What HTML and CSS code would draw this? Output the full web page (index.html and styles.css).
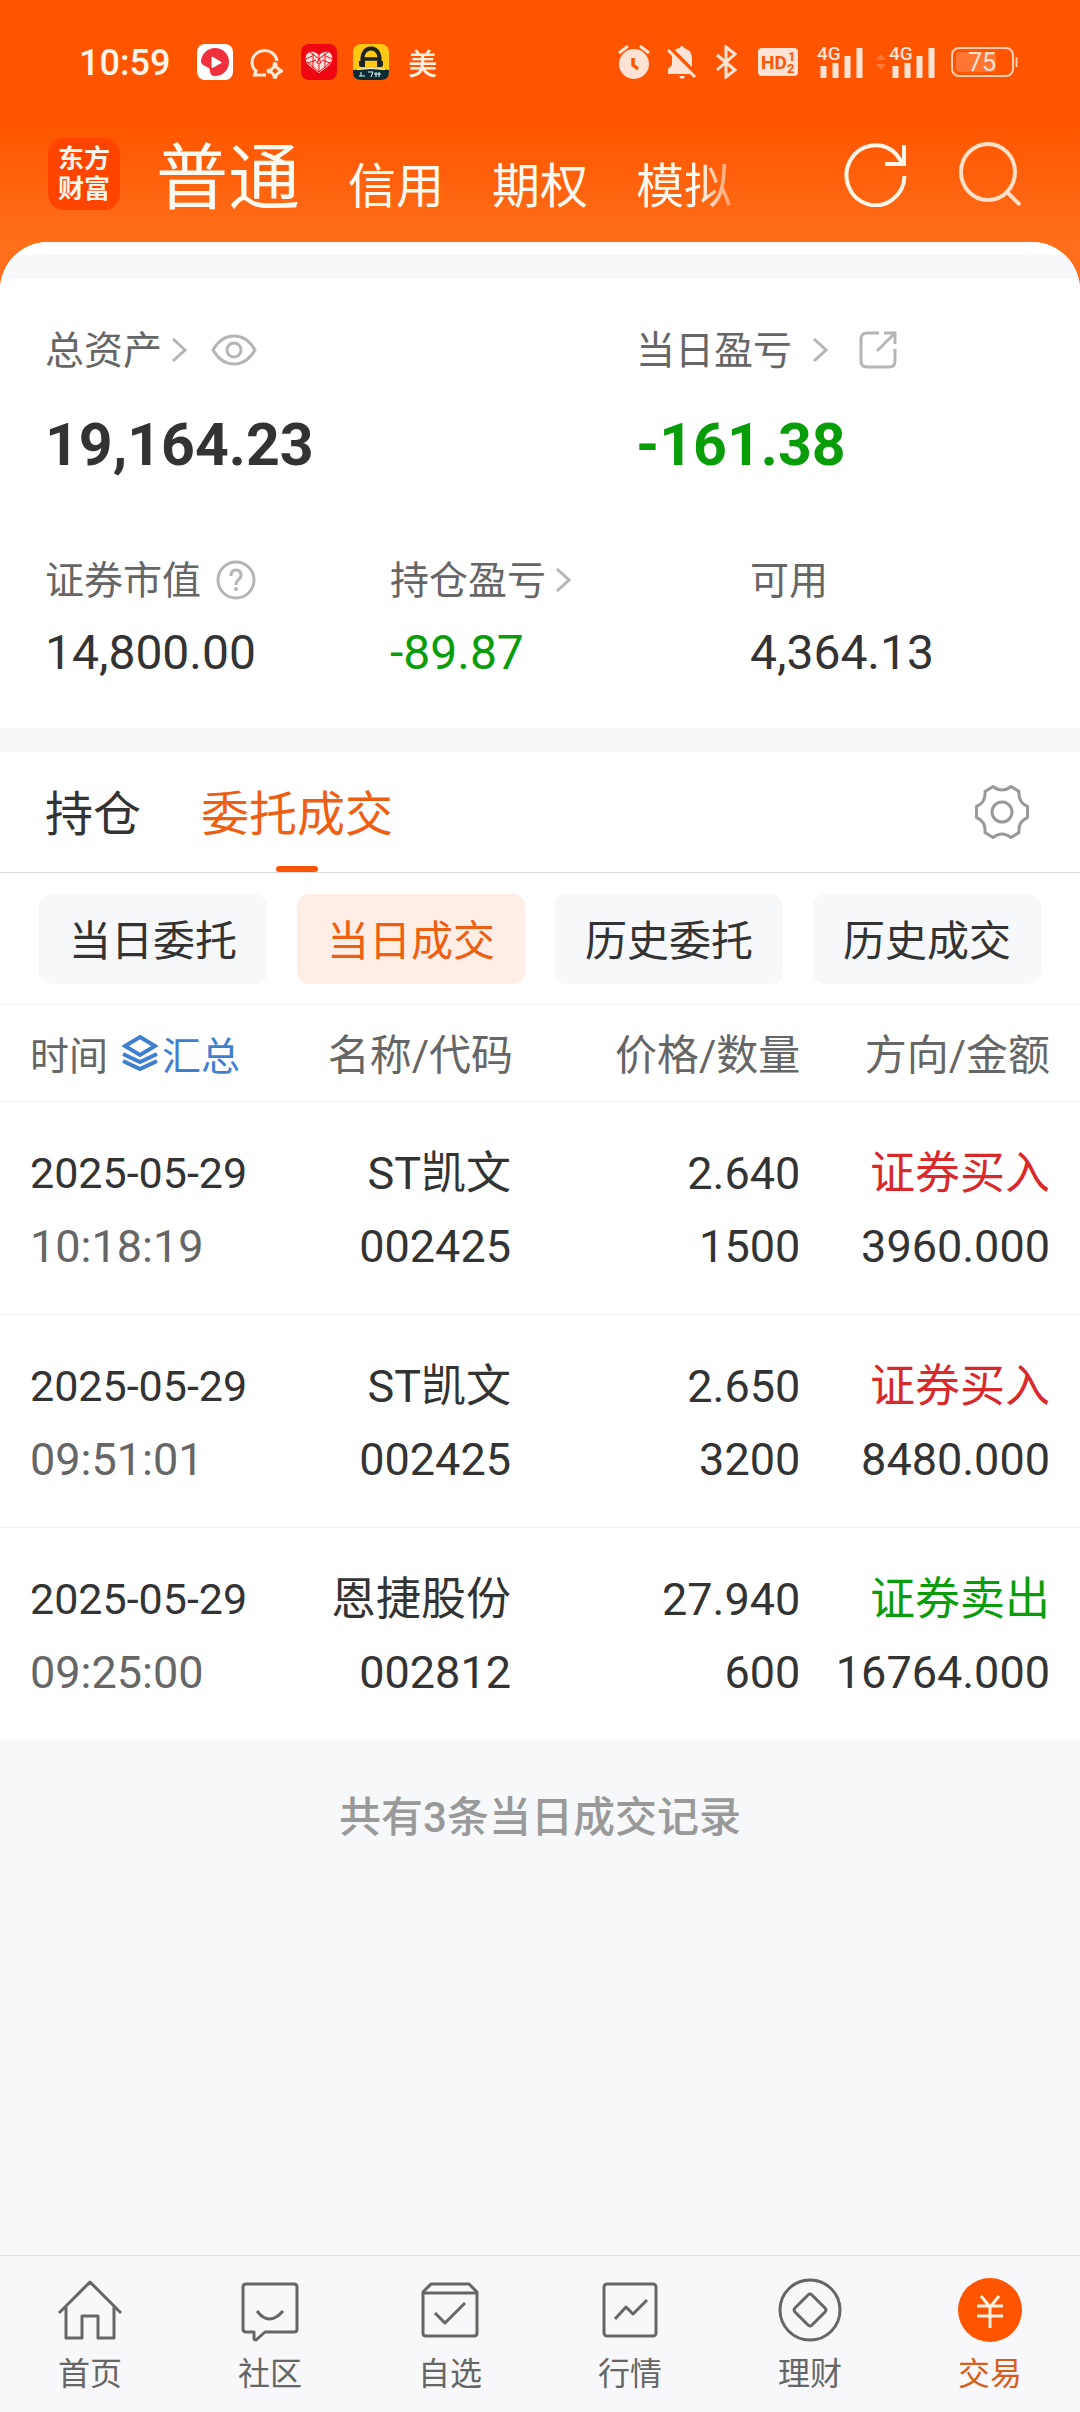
FILE: index.html
```html
<!DOCTYPE html>
<html lang="zh-CN">
<head>
<meta charset="utf-8">
<meta name="viewport" content="width=device-width">
<title>东方财富 交易</title>
<link rel="stylesheet" href="styles.css">
</head>
<body>
<header class="top">
  <div class="status">
    <div class="status-left">
      <span class="clock">10:59</span>
      <svg class="app" viewBox="0 0 36 36"><rect width="36" height="36" rx="8" fill="#fff"/><path d="M18 4a14 14 0 1 1 0 28c-3 0-5-2-5-5 0-2-1-3-3-4-4-2-6-3-6-6C5 9 11 4 18 4z" fill="#f0303c"/><path d="M14.500 13.500v9.500q0 1.500 1.500.7l8-4.400q1.300-.8 0-1.600l-8-4.800q-1.500-.8-1.500.6z" fill="#fff"/></svg>
      <svg class="app" viewBox="0 0 36 36" fill="none" stroke="#ffe9d8" stroke-width="3"><path d="M28 17C27 10 21 6 15 6.500 8 7 3 12 3 18.500c0 3 1 6 4 8.500l-1.500 4H17M26 22l6 5-6 5-5-5z"/><g fill="#ffe9d8" stroke="none"><circle cx="26" cy="20.500" r="2.500"/><circle cx="32" cy="27" r="2"/><circle cx="26" cy="32.500" r="2.500"/><circle cx="20" cy="27" r="2.500"/></g></svg>
      <svg class="app" viewBox="0 0 36 36"><rect width="36" height="36" rx="8" fill="#ee0712"/><path d="M18 29 8 21.500C3 17 4 9 9 8c3-.6 7 .5 9 3.500C20 8.500 24 7.400 27 8c5 1 6 9 1 13.500z" fill="#ffe1dc"/><path d="m9 8 9 7 9-7M5 15l6-3M31 15l-6-3M6 18l12 10M30 18 18 28M12 9v15M24 9v15M18 11v5M18 21v7M7 19l8-3M29 19l-8-3" stroke="#ee0712" stroke-width="1" fill="none"/><path d="m18 15 3 3-3 3-3-3z" fill="#ee0712"/><path d="M16.500 18h3M18 16.500v3" stroke="#ffe1dc"/></svg>
      <svg class="app" viewBox="0 0 36 36"><rect width="36" height="36" rx="8" fill="#ffc813"/><path d="M10 20c-2-8 1-15.500 8-15.500S28 12 26 20" fill="none" stroke="#1b2422" stroke-width="4"/><path d="M10 15h16" stroke="#1b2422" stroke-width="3.500"/><path d="M6 17h6v6H8q-2 0-2-2zM24 17h6v4q0 2-2 2h-4z" fill="#1b2422"/><path d="M0 26q18-3 36 0v2q0 8-8 8H8q-8 0-8-8z" fill="#0d2b34"/><path d="M4 25.500q14-2 28 0" stroke="#fff" fill="none"/><path d="M8 28v4m-2 0h6m3-4h5l-2 5m5-5v5m3-5v5m-5-3h7" stroke="#dff" fill="none"/></svg>
      <span class="notice">美</span>
    </div>
    <div class="status-right">
      <svg viewBox="0 0 32 34" width="32" height="34"><circle cx="16" cy="19" r="15" fill="#ffe3d5"/><path d="m1 8 9-7M31 8l-9-7" stroke="#ffe3d5" stroke-width="3"/><path d="M15 13v7l5 4" fill="none" stroke="#ff5500" stroke-width="3.500"/></svg>
      <svg class="bell" viewBox="0 0 30 34" width="30" height="34"><path d="M8 5q2-2 5-2 0-2 2-2t2 2q8 2 8 11v9l5 6H1v-5l4-4v-8z" fill="#ffe3d5"/><path d="M12 31h6q-1 3-3 3t-3-3z" fill="#ffe3d5"/><path d="m3 3 28 28" stroke="#ff5500" stroke-width="4"/><path d="m1 5 27 27" stroke="#ffe3d5" stroke-width="3"/></svg>
      <svg class="bt" viewBox="0 0 22 34" width="22" height="34"><path d="m1 10 18 15-9 7V2l9 7L1 25" fill="none" stroke="#ffe3d5" stroke-width="3"/></svg>
      <svg class="hd" viewBox="0 0 40 28" width="40" height="28"><rect width="40" height="28" rx="4" fill="#ffe3d5"/><text x="3" y="21" font-size="19" font-weight="700">HD</text><text x="30" y="13" font-size="13" font-weight="700">1</text><text x="29" y="25" font-size="13" font-weight="700">2</text></svg>
      <svg class="signal" viewBox="0 0 47 38" width="47" height="38"><text x="0" y="17" font-size="19" font-weight="500">4G</text><path d="M6.500 23v12M18.500 20v15M30.500 13v22M42.500 5v30" stroke-width="6"/></svg>
      <svg class="updown" viewBox="0 0 10 16" width="10" height="16"><path d="m5 0 5 6H0zM5 16l5-6H0z" fill="#ff7a3a"/></svg>
      <svg class="signal second" viewBox="0 0 47 38" width="47" height="38"><text x="0" y="17" font-size="19" font-weight="500">4G</text><path d="M6.500 23v12M18.500 20v15M30.500 13v22M42.500 5v30" stroke-width="6"/></svg>
      <svg class="battery" viewBox="0 0 67 30" width="67" height="30"><rect x="1" y="1" width="61" height="28" rx="7" fill="none" stroke="#ffcdb3" stroke-width="2"/><rect x="5" y="5" width="40" height="20" rx="4" fill="#ff7532"/><path d="M65.500 10v10" stroke="#ffcdb3" stroke-width="2"/><text x="17" y="24" font-size="25">75</text></svg>
    </div>
  </div>
  <div class="bar">
    <span class="logo"><span>东方</span><span>财富</span></span>
    <nav class="accounts">
      <a href="#" class="on">普通</a><a href="#">信用</a><a href="#">期权</a><a href="#" class="fade">模拟</a>
    </nav>
    <button class="icon" aria-label="刷新"><svg viewBox="0 0 64 66" width="64" height="66" fill="none" stroke="#fff5e8" stroke-width="4"><path d="M60.500 35A29 30 0 1 1 52 13l8 11"/><path d="M60 4v19H41"/></svg></button>
    <button class="icon" aria-label="搜索"><svg viewBox="0 0 64 64" width="64" height="64" fill="none" stroke="#ffe0c8" stroke-width="4"><ellipse cx="30" cy="30" rx="27" ry="28"/><path d="m48 49 14 14"/></svg></button>
  </div>
</header>

<main class="sheet">
  <section class="assets">
    <div class="row totals">
      <div>
        <div class="label"><a href="#">总资产</a><svg class="chev" viewBox="0 0 16 26"><path d="m2 2 12 11L2 24"/></svg><button class="icon eye" aria-label="隐藏金额"><svg viewBox="0 0 46 32" width="46" height="32" fill="none" stroke="#b5b5b5" stroke-width="3"><path d="M2 16Q10 2 23 2t21 14Q36 30 23 30T2 16z"/><circle cx="23" cy="16" r="7"/></svg></button></div>
        <div class="big">19,164.23</div>
      </div>
      <div>
        <div class="label"><a href="#">当日盈亏</a><svg class="chev far" viewBox="0 0 16 26"><path d="m2 2 12 11L2 24"/></svg><button class="icon share" aria-label="分享"><svg viewBox="0 0 38 38" width="38" height="38" fill="none" stroke="#b5b5b5" stroke-width="3"><path d="M20 2H8Q2 2 2 8v22q0 6 6 6h22q6 0 6-6V18M25 2h11v11M35 3 18 20"/></svg></button></div>
        <div class="big green">-161.38</div>
      </div>
    </div>
    <div class="row details">
      <div>
        <div class="label"><span>证券市值</span><button class="icon help" aria-label="说明"><svg viewBox="0 0 40 40" width="40" height="40" fill="none" stroke="#b5b5b5" stroke-width="3"><circle cx="20" cy="20" r="18"/><path d="M15 16q0-6 5-6t5 5q0 3-3 5-2 2-2 5"/><circle cx="20" cy="29" r="1" stroke-width="2"/></svg></button></div>
        <div class="mid">14,800.00</div>
      </div>
      <div>
        <div class="label"><a href="#">持仓盈亏</a><svg class="chev" viewBox="0 0 16 26"><path d="m2 2 12 11L2 24"/></svg></div>
        <div class="mid green">-89.87</div>
      </div>
      <div>
        <div class="label"><span>可用</span></div>
        <div class="mid">4,364.13</div>
      </div>
    </div>
  </section>

  <section class="orders">
    <div class="tabs">
      <button>持仓</button><button class="on">委托成交</button>
      <button class="icon gear" aria-label="设置"><svg viewBox="0 0 54 54" width="54" height="54" fill="none" stroke="#999" stroke-width="3" stroke-linejoin="round"><path d="M18 1.500q9 7 18 0l8 5q-1 11 8.500 15v11q-9.500 4-8.500 15l-8 5q-9-7-18 0l-8-5q1-11-8.500-15v-11q9.500-4 8.500-15z"/><circle cx="27" cy="27" r="10"/></svg></button>
    </div>
    <div class="chips">
      <button>当日委托</button><button class="on">当日成交</button><button>历史委托</button><button>历史成交</button>
    </div>
    <table>
      <colgroup><col class="c1"><col class="c2"><col class="c3"><col class="c4"></colgroup>
      <thead>
        <tr><th><div class="time-head">时间<a href="#" class="sum"><svg viewBox="0 0 36 38" width="36" height="38" fill="none" stroke="#3f7fd0" stroke-width="4"><path d="M18 3 33 12 18 21 3 12z"/><path d="m1 20 17 8 17-8M1 27l17 8 17-8"/></svg>汇总</a></div></th><th>名称/代码</th><th>价格/数量</th><th>方向/金额</th></tr>
      </thead>
      <tbody>
        <tr><td><span class="date">2025-05-29</span><span class="time">10:18:19</span></td><td>ST凯文<br>002425</td><td>2.640<br>1500</td><td><span class="buy">证券买入</span><br>3960.000</td></tr>
        <tr><td><span class="date">2025-05-29</span><span class="time">09:51:01</span></td><td>ST凯文<br>002425</td><td>2.650<br>3200</td><td><span class="buy">证券买入</span><br>8480.000</td></tr>
        <tr><td><span class="date">2025-05-29</span><span class="time">09:25:00</span></td><td>恩捷股份<br>002812</td><td>27.940<br>600</td><td><span class="green">证券卖出</span><br>16764.000</td></tr>
      </tbody>
    </table>
  </section>
  <p class="count">共有3条当日成交记录</p>
</main>

<nav class="dock">
  <a href="#"><svg viewBox="0 0 64 64"><path d="M1 35 32 4l31 31M8 29v31h16V38h16v22h16V29"/></svg>首页</a>
  <a href="#"><svg viewBox="0 0 64 64"><path d="M8 6h48q3 0 3 3v42q0 3-3 3H27l-9 8q-2 0-2-2v-6H8q-3 0-3-3V9q0-3 3-3zM19 33q12 16 26 0"/></svg>社区</a>
  <a href="#"><svg viewBox="0 0 64 64"><path d="M5 14v41q0 3 3 3h48q3 0 3-3V14L51 6H13zM5 15h54M17 35l10 10 20-20"/></svg>自选</a>
  <a href="#"><svg viewBox="0 0 64 64"><rect x="6" y="6" width="52" height="52" rx="3"/><path d="m17 41 11-12 7 7 14-14"/></svg>行情</a>
  <a href="#"><svg viewBox="0 0 64 64"><circle cx="32" cy="32" r="30"/><path d="M30 17q2-2 4 0l13 13q2 2 0 4L34 47q-2 2-4 0L17 34q-2-2 0-4z"/></svg>理财</a>
  <a href="#" class="on"><svg viewBox="0 0 64 64"><circle cx="32" cy="32" r="32"/><path d="m23 18 9 11 9-11M19 28h26M19 38h26M32 28v22"/></svg>交易</a>
</nav>
</body>
</html>
```
FILE: styles.css
```css
* { box-sizing: border-box; }

body {
  margin: 0;
  min-height: 100vh;
  display: flex;
  flex-direction: column;
  background: #f7f8fa;
  color: #333;
  font-family: Roboto, "Noto Sans CJK SC", sans-serif;
  font-size: 39px;
}

a { color: inherit; text-decoration: none; }
button { font: inherit; color: inherit; border: 0; padding: 0; background: none; }
svg { display: block; flex: none; }
.icon { display: block; flex: none; }
.green { color: #0a9d0a; }

/* header */
.top {
  padding-bottom: 48px;
  background: linear-gradient(#ff5500 120px, #ff6e1a 242px);
}
.status {
  display: flex;
  justify-content: space-between;
  height: 124px;
  padding: 0 62px 0 79px;
}
.status-left, .status-right { display: flex; align-items: center; }
.status-left { gap: 16px; }
.clock { color: #fff5ea; font-size: 36px; font-weight: 500; line-height: 40px; padding-top: 2px; margin-right: 11px; }
.app { width: 36px; height: 36px; }
.notice { color: #fff0e0; font-size: 29px; font-weight: 500; margin-left: 3px; }
.status-right text { fill: #ffe3d5; }
.bell { margin-left: 17px; }
.bt { margin-left: 19px; }
.hd { margin-left: 20px; }
.status-right .hd text { fill: #ff5500; }
.signal { margin-left: 19px; stroke: #ffe3d5; }
.signal text { stroke: none; }
.updown { margin-left: 12px; }
.second { margin-left: 3px; }
.battery { margin-left: 15px; }

.bar {
  display: flex;
  align-items: center;
  height: 118px;
  padding: 0 58px 18px 48px;
}
.logo {
  display: flex;
  flex-direction: column;
  justify-content: center;
  align-items: center;
  width: 72px;
  height: 72px;
  flex: none;
  border-radius: 16px;
  background: #ff4400;
  color: #fff5ea;
  font-size: 26px;
  font-weight: 700;
  line-height: 30px;
}
.accounts {
  display: flex;
  align-items: baseline;
  gap: 48px;
  flex: 1;
  margin-left: 36px;
  padding-top: 17px;
  color: #fffaf0;
  font-size: 48px;
  line-height: 72px;
}
.accounts .on { font-size: 72px; }
.fade {
  background: linear-gradient(90deg, #fffaf0 65%, #ff9a60);
  background-clip: text;
  -webkit-background-clip: text;
  color: transparent;
}
.bar .icon + .icon { margin-left: 50px; }

/* content sheet */
.sheet {
  flex: 1;
  margin-top: -48px;
  border-radius: 48px 48px 0 0;
  overflow: hidden;
  background: #f7f8fa;
}
.assets {
  border-top: 13px solid #fff;
  background: linear-gradient(#f7f8fa 24px, #fff 24px);
  padding: 65px 45px 47px;
}
.row { display: grid; }
.totals { grid-template-columns: 591fr 399fr; }
.details { grid-template-columns: 345fr 360fr 285fr; margin-top: 70px; }
.label { display: flex; align-items: center; height: 60px; line-height: 56px; color: #666; }
.label a, .label span { padding-top: 2px; }
.chev { width: 16px; height: 26px; margin-left: 9px; fill: none; stroke: #b5b5b5; stroke-width: 3; }
.far { margin-left: 20px; }
.eye { margin-left: 24px; }
.share { margin-left: 31px; }
.help { margin-left: 15px; }
.big { font-size: 59px; font-weight: 700; line-height: 70px; margin-top: 30px; }
.mid { font-size: 48px; line-height: 56px; margin-top: 15px; }

.orders { margin-top: 24px; background: #fff; }
.tabs {
  display: flex;
  gap: 60px;
  height: 121px;
  padding: 0 51px 0 45px;
  border-bottom: 1px solid #ddd;
  font-size: 48px;
}
.tabs button:not(.gear) { padding-bottom: 4px; }
.tabs .on { position: relative; color: #ee5f14; }
.tabs .on::after {
  content: "";
  position: absolute;
  left: 50%;
  bottom: 0;
  width: 42px;
  height: 6px;
  margin-left: -21px;
  border-radius: 3px;
  background: #ff5500;
}
.gear { margin-left: auto; align-self: center; }
.chips {
  display: grid;
  grid-template-columns: repeat(4, 1fr);
  gap: 30px;
  padding: 21px 39px 20px;
  border-bottom: 1px solid #f4f4f4;
  font-size: 42px;
}
.chips button { height: 90px; padding-bottom: 3px; border-radius: 12px; background: #f7f8fa; }
.chips .on { background: #ffeee6; color: #ee5f14; }

table { width: 100%; table-layout: fixed; border-collapse: collapse; }
.c1 { width: 25%; }
.c2 { width: 22.500%; }
.c3 { width: 26.600%; }
th, td { padding: 0; text-align: right; font-weight: 400; }
th:first-child, td:first-child { padding-left: 30px; text-align: left; }
th:last-child, td:last-child { padding-right: 30px; }
thead tr { height: 96px; border-bottom: 1px solid #eee; }
th { padding-bottom: 3px; color: #666; font-size: 42px; }
.time-head, .sum { display: flex; align-items: center; font-size: 39px; }
.time-head { padding-top: 4px; }
.sum { gap: 4px; margin-left: 14px; color: #3f7fd0; }
tbody tr { height: 213px; }
tbody tr + tr { border-top: 1px solid #eee; }
td { padding-top: 4px; font-size: 45px; line-height: 73px; white-space: nowrap; }
td:nth-child(2) { padding-right: 2px; }
.date, .time { display: block; }
.date { font-size: 43px; }
.time { color: #666; }
.buy { color: #d9292b; }

.count { margin: 0; padding: 48px 0; text-align: center; color: #999; font-size: 42px; font-weight: 500; line-height: 60px; }

/* bottom navigation */
.dock {
  display: grid;
  grid-template-columns: repeat(6, 1fr);
  height: 157px;
  border-top: 1px solid #dfe2e4;
  background: #f8f8fa;
  color: #666;
  font-size: 32px;
  line-height: 48px;
}
.dock a { display: flex; flex-direction: column; align-items: center; gap: 8px; padding-top: 22px; }
.dock svg { width: 64px; height: 64px; fill: none; stroke: #666; stroke-width: 3; stroke-linejoin: round; }
.dock .on { color: #d9601c; }
.dock .on circle { fill: #ff5500; stroke: none; }
.dock .on path { stroke: #fff0e0; }
```
